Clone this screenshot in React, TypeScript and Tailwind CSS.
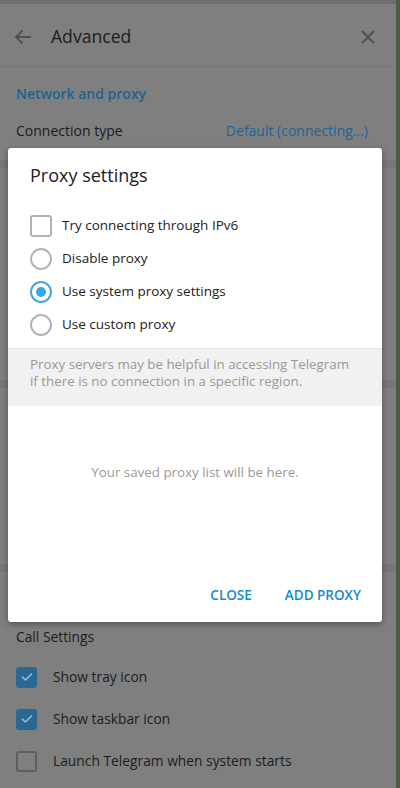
import React from "react";

const font = { fontFamily: '"Open Sans", "Noto Sans", sans-serif' };

function DimCheck({ checked }: { checked: boolean }) {
  return checked ? (
    <div className="w-[21px] h-[21px] rounded-[3px] bg-[#2a6893] flex items-center justify-center shrink-0">
      <svg width="12" height="10" viewBox="0 0 12 10" fill="none">
        <path d="M1.5 5.2 L4.5 8 L10.5 2" stroke="#9fb8c9" strokeWidth="1.6" strokeLinecap="round" strokeLinejoin="round" />
      </svg>
    </div>
  ) : (
    <div className="w-[21px] h-[21px] rounded-[3px] border-2 border-[#5e5e5e] shrink-0" />
  );
}

function Radio({ selected }: { selected?: boolean }) {
  return selected ? (
    <div className="w-[22px] h-[22px] rounded-full border-2 border-[#40a7e3] flex items-center justify-center shrink-0">
      <div className="w-[10px] h-[10px] rounded-full bg-[#40a7e3]" />
    </div>
  ) : (
    <div className="w-[22px] h-[22px] rounded-full border-2 border-[#b3b3b3] shrink-0" />
  );
}

export default function App() {
  const options = [
    { label: "Disable proxy", selected: false },
    { label: "Use system proxy settings", selected: true },
    { label: "Use custom proxy", selected: false },
  ];

  return (
    <div className="relative w-[400px] h-[788px] overflow-hidden bg-[#6e6e6e] flex" style={font}>
      {/* dimmed settings panel */}
      <div className="w-[396px] mt-[4px] bg-[#7f7f7f] flex flex-col">
        <div className="h-[63px] pt-[3px] flex items-center border-b border-[#767676] shrink-0">
          <svg className="ml-[14px]" width="18" height="16" viewBox="0 0 18 16" fill="none">
            <path d="M17 8 H2 M8.5 1.5 L2 8 L8.5 14.5" stroke="#4f4f4f" strokeWidth="1.8" />
          </svg>
          <div className="ml-[19px] text-[17.6px] text-[#1c1c1c]">Advanced</div>
          <svg className="ml-auto mr-[21px]" width="14" height="14" viewBox="0 0 14 14" fill="none">
            <path d="M1 1 L13 13 M13 1 L1 13" stroke="#4f4f4f" strokeWidth="1.8" />
          </svg>
        </div>
        <div className="h-[93px] shrink-0 px-[16px]">
          <div className="pt-[16px] text-[14px] font-semibold text-[#1d6390]">Network and proxy</div>
          <div className="mt-[16px] flex justify-between text-[14px]">
            <span className="text-[#1c1c1c]">Connection type</span>
            <span className="text-[#1f6494] mr-[12px]">Default (connecting...)</span>
          </div>
        </div>
        <div className="h-[8px] bg-[#777777] shrink-0" />
        <div className="h-[212px] shrink-0" />
        <div className="h-[8px] bg-[#777777] shrink-0" />
        <div className="h-[176px] shrink-0" />
        <div className="h-[8px] bg-[#777777] shrink-0" />
        <div className="px-[16px] pt-[55px] text-[13.8px] text-[#1c1c1c]">
          <div>Call Settings</div>
          <div className="mt-[19px] flex flex-col gap-[21px]">
            {[
              { label: "Show tray icon", checked: true },
              { label: "Show taskbar icon", checked: true },
              { label: "Launch Telegram when system starts", checked: false },
            ].map((r) => (
              <div key={r.label} className="flex items-center gap-[16px]">
                <DimCheck checked={r.checked} />
                <span>{r.label}</span>
              </div>
            ))}
          </div>
        </div>
      </div>
      <div className="w-[4px] bg-[#4f5a45]" />

      {/* dialog */}
      <div className="absolute left-[8px] top-[148px] w-[374px] h-[474px] bg-white rounded-[3px] shadow-[0_2px_6px_rgba(0,0,0,0.35)] flex flex-col">
        <div className="pl-[22px] pt-[15px] text-[18px] leading-[24px] text-[#222]">Proxy settings</div>
        <div className="pt-[22px] pl-[22px]">
          <div className="h-[33px] flex items-center gap-[10px] text-[13.5px] text-[#222]">
            <div className="w-[22px] h-[22px] rounded-[3px] border-2 border-[#b3b3b3] shrink-0" />
            <span>Try connecting through IPv6</span>
          </div>
          {options.map((o) => (
            <div key={o.label} className="h-[33px] flex items-center gap-[10px] text-[13.5px] text-[#222]">
              <Radio selected={o.selected} />
              <span>{o.label}</span>
            </div>
          ))}
        </div>
        <div className="mt-[7px] h-[58px] bg-[#f1f1f1] border-t border-[#e4e4e4] px-[22px] pt-[7px] text-[13.35px] leading-[17px] text-[#999]">
          Proxy servers may be helpful in accessing Telegram
          <br />
          if there is no connection in a specific region.
        </div>
        <div className="h-[132px] flex items-center justify-center text-[13.35px] text-[#999]">
          Your saved proxy list will be here.
        </div>
        <div className="flex-1 flex items-start justify-end gap-[33px] pr-[21px] pt-[47px] text-[13.5px] font-semibold text-[#168acd]">
          <span>CLOSE</span>
          <span>ADD PROXY</span>
        </div>
      </div>
    </div>
  );
}
